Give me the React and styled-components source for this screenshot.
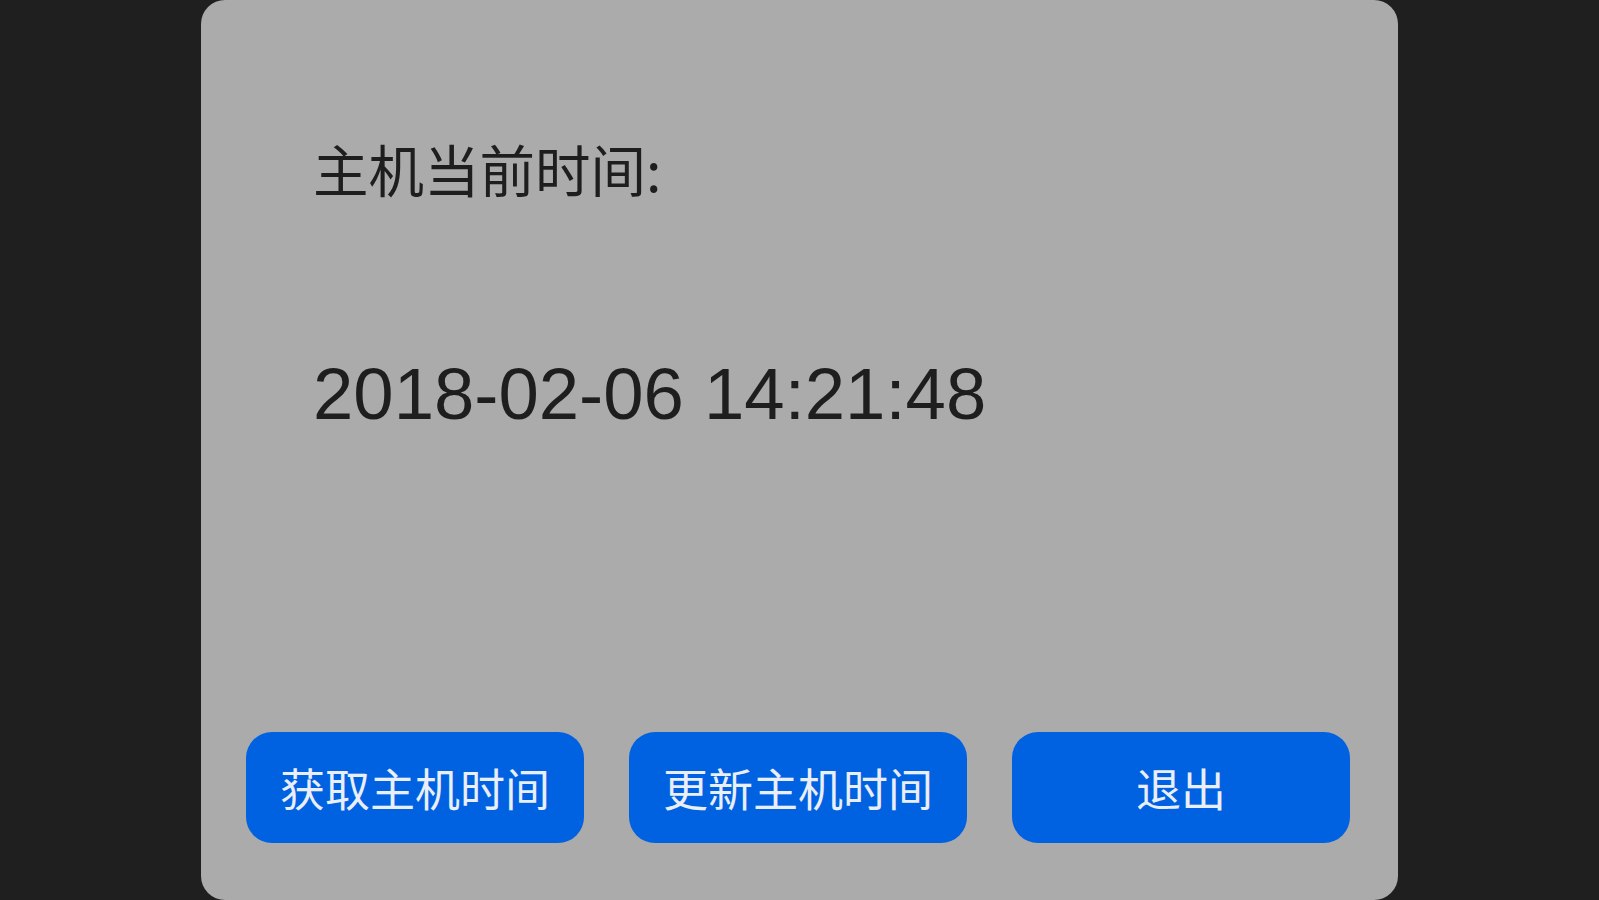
import styled, { createGlobalStyle } from "styled-components";

const GlobalStyle = createGlobalStyle`
  html, body {
    margin: 0;
    padding: 0;
    background: #1f1f1f;
    overflow: hidden;
  }
  body {
    font-family: "Liberation Sans", "Noto Sans CJK SC", sans-serif;
  }
`;

const Screen = styled.div`
  width: 100vw;
  height: 100vh;
  display: flex;
  justify-content: center;
`;

const Panel = styled.div`
  width: 1197px;
  height: 900px;
  box-sizing: border-box;
  background: #ababab;
  border-radius: 24px;
  display: flex;
  flex-direction: column;
  padding: 0 48px 57px 45px;
`;

const Info = styled.div`
  padding: 141px 0 0 67px;
  color: #1e1e1e;
`;

const Label = styled.div`
  font-family: "Noto Sans CJK SC", sans-serif;
  font-size: 55.5px;
  line-height: 1;
`;

const TimeText = styled.div`
  margin-top: 161px;
  font-size: 72.5px;
  line-height: 1;
`;

const ButtonRow = styled.div`
  margin-top: auto;
  display: flex;
  gap: 45px;
`;

const ActionButton = styled.button`
  flex: 1;
  height: 111px;
  border: none;
  border-radius: 26px;
  background: #0062e1;
  color: #e9eef8;
  font-family: "Noto Sans CJK SC", sans-serif;
  font-size: 45px;
  padding: 0;
  cursor: pointer;
`;

const App = () => {
  const actions = ["获取主机时间", "更新主机时间", "退出"];
  return (
    <>
      <GlobalStyle />
      <Screen>
        <Panel>
          <Info>
            <Label>主机当前时间:</Label>
            <TimeText>2018-02-06 14:21:48</TimeText>
          </Info>
          <ButtonRow>
            {actions.map((a) => (
              <ActionButton key={a}>{a}</ActionButton>
            ))}
          </ButtonRow>
        </Panel>
      </Screen>
    </>
  );
};

export default App;
